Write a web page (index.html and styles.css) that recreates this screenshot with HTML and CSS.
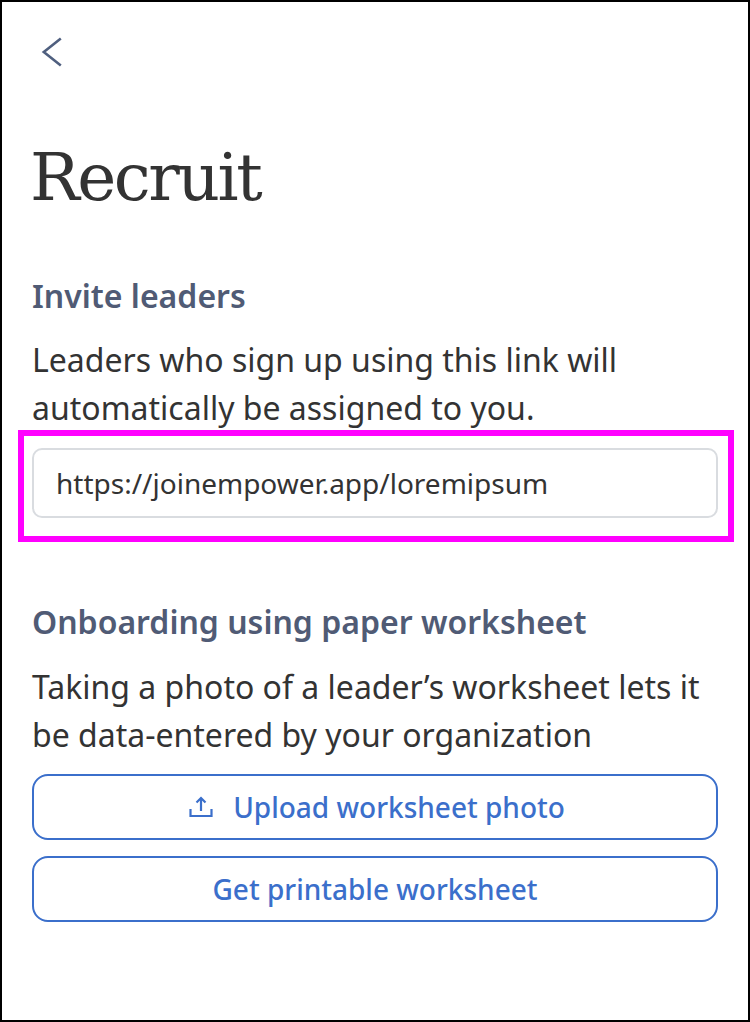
FILE: index.html
```html
<!DOCTYPE html>
<html lang="en">
<head>
  <meta charset="UTF-8">
  <meta name="viewport" content="width=device-width, initial-scale=1.0">
  <title>Recruit</title>
  <link rel="stylesheet" href="styles.css">
</head>
<body>
  <div class="screen">
    <a class="back-link" href="#" aria-label="Back">
      <svg width="24" height="32" viewBox="0 0 24 32" fill="none" stroke="currentColor" stroke-width="2.6">
        <path d="M20.8 2.5L3.8 16L20.8 29.5"/>
      </svg>
    </a>

    <h1 class="page-title">Recruit</h1>

    <section class="invite">
      <h2 class="section-title">Invite leaders</h2>
      <p class="section-text">Leaders who sign up using this link will automatically be assigned to you.</p>
      <div class="highlight">
        <input class="link-input" type="text" value="https://joinempower.app/loremipsum" readonly>
      </div>
    </section>

    <section class="worksheet">
      <h2 class="section-title">Onboarding using paper worksheet</h2>
      <p class="section-text">Taking a photo of a leader’s worksheet lets it be data-entered by your organization</p>
      <div class="actions">
        <button class="outline-btn" type="button">
          <svg class="btn-icon" width="24" height="22" viewBox="0 0 24 22" fill="none" stroke="currentColor" stroke-width="2.2">
            <path d="M12 15V2M7.5 6.5L12 2L16.5 6.5M1.5 13V20H22.5V13"/>
          </svg>
          Upload worksheet photo
        </button>
        <button class="outline-btn" type="button">Get printable worksheet</button>
      </div>
    </section>
  </div>
</body>
</html>
```

FILE: styles.css
```css
* {
  box-sizing: border-box;
  margin: 0;
  padding: 0;
}

body {
  background: #fff;
  font-family: 'Noto Sans', sans-serif;
  color: #333;
}

.screen {
  width: 750px;
  height: 1022px;
  border: 2px solid #000;
  padding: 34px 30px 0;
}

.back-link {
  display: block;
  width: 24px;
  height: 32px;
  margin-left: 8px;
  color: #4f5f7f;
}

.page-title {
  margin: 65px 0 0 -2px;
  font-family: 'DejaVu Serif', serif;
  font-weight: 400;
  font-size: 66px;
  line-height: 90px;
  letter-spacing: -2.45px;
  color: #333;
}

.invite {
  margin-top: 52px;
}

.section-title {
  font-size: 32px;
  line-height: 42px;
  font-weight: 600;
  color: #505b75;
}

.section-text {
  margin-top: 19px;
  font-size: 32px;
  line-height: 48px;
  color: #333;
}

.worksheet .section-text {
  margin-top: 20px;
}

.highlight {
  margin: -2px -16px 0 -14px;
  padding: 12px 10px 18px 8px;
  border: 6px solid #f0f;
}

.link-input {
  display: block;
  width: 100%;
  height: 70px;
  padding: 0 22px;
  border: 2px solid #d9dce0;
  border-radius: 10px;
  font-family: inherit;
  font-size: 28px;
  color: #333;
  background: #fff;
  outline: none;
}

.worksheet {
  margin-top: 59px;
}

.actions {
  display: flex;
  flex-direction: column;
  gap: 16px;
  margin-top: 15px;
}

.outline-btn {
  display: flex;
  align-items: center;
  justify-content: center;
  gap: 20px;
  height: 66px;
  border: 2px solid #3b6fcb;
  border-radius: 16px;
  background: #fff;
  font-family: inherit;
  font-size: 28px;
  font-weight: 500;
  color: #3b6fcb;
}

.btn-icon {
  margin-left: 4px;
}
```
